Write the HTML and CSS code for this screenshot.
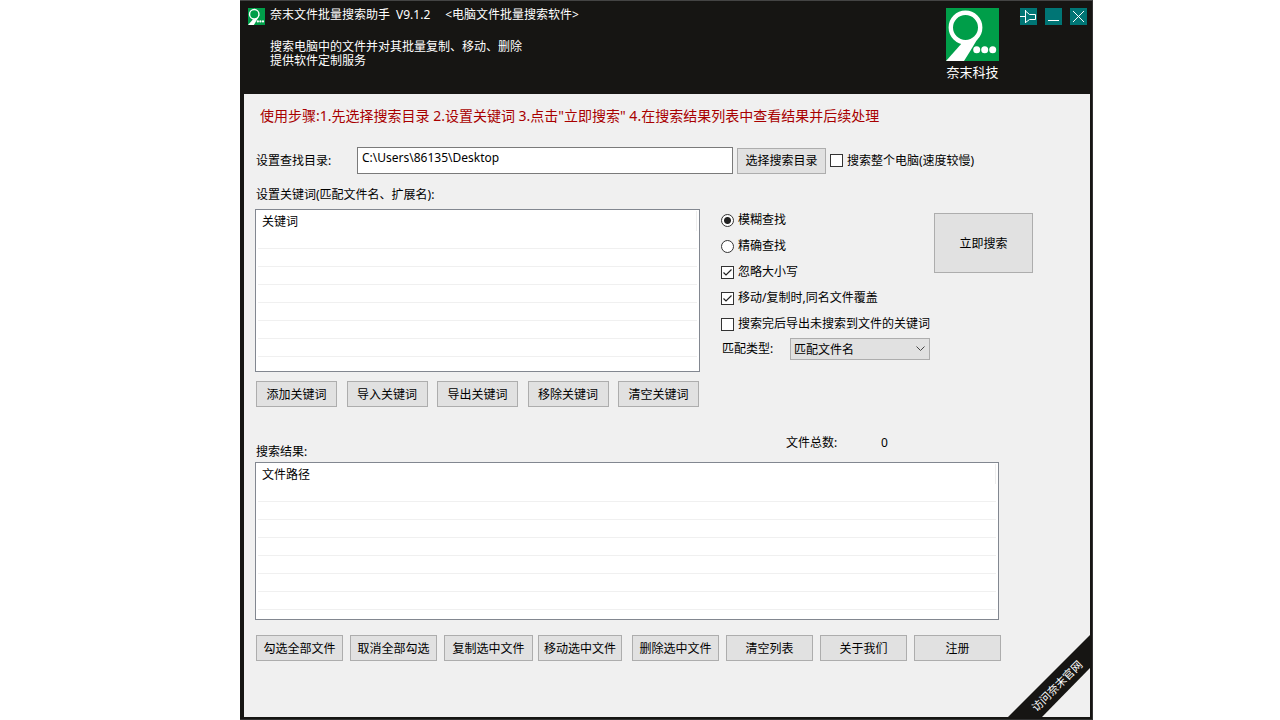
FILE: index.html
```html
<!DOCTYPE html>
<html lang="zh-CN">
<head>
<meta charset="utf-8">
<title>奈末文件批量搜索助手</title>
<link rel="stylesheet" href="styles.css">
</head>
<body>
<svg class="defs" aria-hidden="true">
  <symbol id="logo" viewBox="0 0 53 53">
    <rect width="53" height="53" fill="#009e49"/>
    <path d="M0 53L16 35L36 22Q32 31 18 53Z" fill="#fff"/>
    <circle cx="19.5" cy="19.5" r="14.7" fill="#009e49" stroke="#fff" stroke-width="4.4"/>
    <g fill="#fff"><circle cx="30.7" cy="41.7" r="3.5"/><circle cx="38.7" cy="41.7" r="3.5"/><circle cx="46.7" cy="41.7" r="3.5"/></g>
  </symbol>
</svg>
<div class="window">
  <header class="header">
    <svg class="app-icon" aria-hidden="true"><use href="#logo"/></svg>
    <div class="intro">
      <h1 class="title"><span>奈末文件批量搜索助手</span><span class="version">V9.1.2</span><span>&lt;电脑文件批量搜索软件&gt;</span></h1>
      <p class="desc">搜索电脑中的文件并对其批量复制、移动、删除<br>提供软件定制服务</p>
    </div>
    <div class="brand">
      <svg class="brand-logo" aria-hidden="true"><use href="#logo"/></svg>
      <span>奈末科技</span>
    </div>
    <div class="controls">
      <button class="control" type="button" aria-label="置顶"><svg viewBox="0 0 17 17"><path d="M0 8.5H5.5M5.5 2V15M5.5 3L9.5 6.5H15.5V11.5H9.5L5.5 14.5"/></svg></button>
      <button class="control" type="button" aria-label="最小化"><svg viewBox="0 0 17 17"><path d="M3 12.5H14"/></svg></button>
      <button class="control" type="button" aria-label="关闭"><svg viewBox="0 0 17 17"><path d="M3 3L14 14M14 3L3 14"/></svg></button>
    </div>
  </header>
  <main class="content">
    <p class="steps">使用步骤:1.先选择搜索目录 2.设置关键词 3.点击"立即搜索" 4.在搜索结果列表中查看结果并后续处理</p>
    <div class="path-row">
      <label class="path-label" for="path">设置查找目录:</label>
      <input class="path-input" id="path" type="text" value="C:\Users\86135\Desktop">
      <button class="btn btn-browse" type="button">选择搜索目录</button>
      <label class="option"><input type="checkbox">搜索整个电脑(速度较慢)</label>
    </div>
    <h2 class="label">设置关键词(匹配文件名、扩展名):</h2>
    <div class="keywords">
      <div class="keyword-pane">
        <div class="list list-keywords">
          <table>
            <thead><tr><th>关键词</th></tr></thead>
            <tbody><tr><td></td></tr><tr><td></td></tr><tr><td></td></tr><tr><td></td></tr><tr><td></td></tr><tr><td></td></tr><tr><td></td></tr></tbody>
          </table>
        </div>
        <div class="keyword-actions">
          <button class="btn" type="button">添加关键词</button>
          <button class="btn" type="button">导入关键词</button>
          <button class="btn" type="button">导出关键词</button>
          <button class="btn" type="button">移除关键词</button>
          <button class="btn" type="button">清空关键词</button>
        </div>
      </div>
      <div class="options">
        <label class="option"><input type="radio" name="mode" checked>模糊查找</label>
        <label class="option"><input type="radio" name="mode">精确查找</label>
        <label class="option"><input type="checkbox" checked>忽略大小写</label>
        <label class="option"><input type="checkbox" checked>移动/复制时,同名文件覆盖</label>
        <label class="option"><input type="checkbox">搜索完后导出未搜索到文件的关键词</label>
        <div class="match">
          <label for="match">匹配类型:</label>
          <select id="match"><option>匹配文件名</option></select>
        </div>
      </div>
      <button class="btn btn-search" type="button">立即搜索</button>
    </div>
    <div class="result-head">
      <h2 class="result-label">搜索结果:</h2>
      <span class="count-label">文件总数:</span>
      <output>0</output>
    </div>
    <div class="list list-results">
      <table>
        <thead><tr><th>文件路径</th></tr></thead>
        <tbody><tr><td></td></tr><tr><td></td></tr><tr><td></td></tr><tr><td></td></tr><tr><td></td></tr><tr><td></td></tr><tr><td></td></tr></tbody>
      </table>
    </div>
    <div class="result-actions">
      <button class="btn" type="button">勾选全部文件</button>
      <button class="btn" type="button">取消全部勾选</button>
      <button class="btn btn-wide" type="button">复制选中文件</button>
      <button class="btn btn-narrow" type="button">移动选中文件</button>
      <button class="btn" type="button">删除选中文件</button>
      <button class="btn" type="button">清空列表</button>
      <button class="btn" type="button">关于我们</button>
      <button class="btn" type="button">注册</button>
    </div>
    <a class="ribbon" href="#">
      <svg viewBox="0 0 82 82"><path d="M82 0V33L34 82H0Z"/><text x="0" y="4" text-anchor="middle" transform="translate(49 51) rotate(-45)">访问奈末官网</text></svg>
    </a>
  </main>
</div>
</body>
</html>
```
FILE: styles.css
```css
* { box-sizing: border-box; }
body {
  margin: 0;
  background: #fff;
  color: #000;
  font: 12px/18px "Noto Sans", "Noto Sans CJK SC", sans-serif;
}
h1, h2, p { margin: 0; font-size: 12px; font-weight: 400; }
button, input, select { font: inherit; color: inherit; }
.defs { position: absolute; width: 0; height: 0; }

.window {
  display: flex;
  flex-direction: column;
  min-height: 100vh;
  margin: 0 187px 0 240px;
  background: #161513;
  border-top: 1px solid #444;
  border-right: 1px solid #333;
  border-bottom: 1px solid #333;
}

.header {
  display: flex;
  height: 93px;
  padding: 7px 5px 0 8px;
  color: #fff;
}
.app-icon { width: 17px; height: 17px; }
.intro { flex: 1; padding-left: 5px; }
.title { display: flex; line-height: 14px; }
.version { margin: 0 15px 0 6px; }
.desc { margin-top: 18px; line-height: 14px; }
.brand {
  display: flex;
  flex-direction: column;
  align-items: center;
  width: 53px;
  margin-right: 21px;
  font-size: 13px;
  line-height: 22px;
  white-space: nowrap;
}
.brand-logo { width: 53px; height: 53px; }
.controls { display: flex; gap: 8px; }
.control {
  width: 17px;
  height: 17px;
  padding: 0;
  border: 0;
  background: #007575;
}
.control svg { display: block; fill: none; stroke: #fff; stroke-width: 1; }

.content {
  position: relative;
  flex: 1;
  margin: 0 2px 2px 4px;
  padding: 12px 12px 0 11px;
  background: #f0f0f0;
}
.steps { padding-left: 5px; color: #a80000; font-size: 14px; line-height: 20px; }
.path-row { display: flex; align-items: center; margin-top: 21px; }
.path-label { width: 102px; padding-left: 1px; }
.path-input {
  width: 376px;
  height: 27px;
  padding: 0 4px 6px;
  border: 1px solid #7a7a7a;
  background: #fff;
}
.btn {
  height: 26px;
  padding: 1px 0 0;
  border: 1px solid #adadad;
  background: #e1e1e1;
  text-align: center;
  white-space: nowrap;
}
.btn-browse { width: 89px; margin: 0 4px; }
.option { display: flex; align-items: center; gap: 4px; white-space: nowrap; }
.option input {
  flex: none;
  appearance: none;
  width: 13px;
  height: 13px;
  margin: 0;
  border: 1px solid #333;
  background: #fff;
}
.option input[type="radio"] { border-radius: 50%; }
.option input[type="radio"]:checked {
  background: radial-gradient(circle, #222 0 3px, #fff 4px);
}
.option input[type="checkbox"]:checked {
  background: #fff url("data:image/svg+xml,%3Csvg xmlns='http://www.w3.org/2000/svg' viewBox='0 0 11 11'%3E%3Cpath d='M1.5 5.5L4 8L9.5 2.5' fill='none' stroke='%23222' stroke-width='1.2'/%3E%3C/svg%3E");
}
.label { margin-top: 12px; padding: 0 0 3px 1px; line-height: 18px; }

.keywords { display: flex; align-items: flex-start; }
.keyword-pane { width: 445px; margin: 2px 21px 0 0; }
.list { padding: 1px 2px; border: 1px solid #828790; background: #fff; overflow: hidden; }
.list-keywords { height: 163px; }
.list-results { width: 744px; height: 158px; }
.list table { width: 100%; border-collapse: separate; border-spacing: 0; }
.list th {
  height: 20px;
  padding: 1px 4px 0;
  border-right: 1px solid #eee;
  font-weight: 400;
  text-align: left;
}
.list td { height: 18px; padding: 0; border-bottom: 1px solid #f0f0f0; }
.keyword-actions {
  display: grid;
  grid-template-columns: repeat(5, 81px);
  justify-content: space-between;
  margin-top: 9px;
  padding: 0 1px;
}
.options { width: 213px; }
.options .option { height: 26px; }
.match { display: flex; align-items: center; justify-content: space-between; height: 24px; padding: 0 4px 0 1px; }
.match select {
  appearance: none;
  width: 140px;
  height: 22px;
  padding: 1px 3px 0;
  border: 1px solid #adadad;
  border-radius: 0;
  background: #e1e1e1 url("data:image/svg+xml,%3Csvg xmlns='http://www.w3.org/2000/svg' width='9' height='6'%3E%3Cpath d='M.5 .5L4.5 4.5L8.5 .5' fill='none' stroke='%23444'/%3E%3C/svg%3E") no-repeat right 4px center;
}
.btn-search { width: 99px; height: 60px; margin-top: 6px; }

.result-head { display: flex; height: 29px; margin-top: 26px; padding-left: 1px; }
.result-label { align-self: flex-end; width: 530px; line-height: 20px; }
.count-label { width: 95px; }
.count-label, .result-head output { line-height: 20px; }
.result-actions {
  display: grid;
  grid-template-columns: repeat(7, 94px) 87px;
  margin-top: 15px;
  padding-left: 1px;
}
.result-actions .btn { width: 87px; }
.result-actions .btn-wide { width: 89px; }
.result-actions .btn-narrow { width: 84px; }

.ribbon { position: absolute; right: 0; bottom: 0; width: 82px; height: 82px; }
.ribbon svg { display: block; fill: #161513; }
.ribbon text { fill: #fff; font-size: 11px; }
```
